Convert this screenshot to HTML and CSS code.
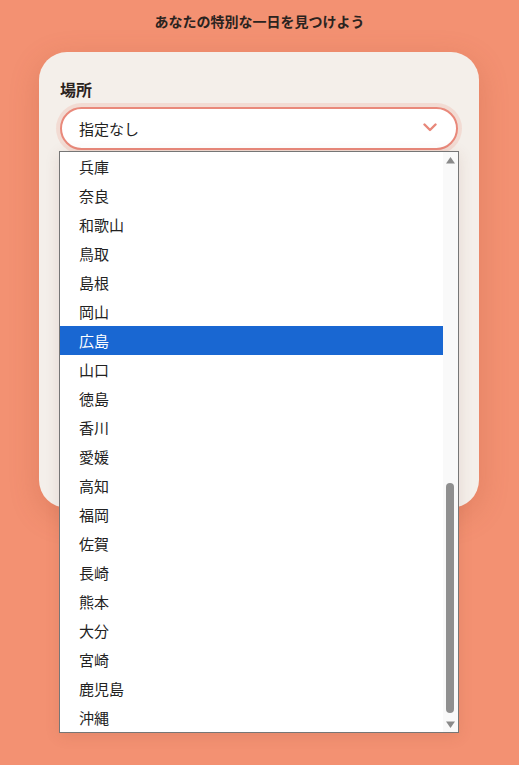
FILE: index.html
```html
<!DOCTYPE html>
<html lang="ja">
<head>
<meta charset="utf-8">
<title>あなたの特別な一日を見つけよう</title>
<link rel="stylesheet" href="styles.css">
</head>
<body>
<h1 class="title">あなたの特別な一日を見つけよう</h1>
<section class="card">
  <label class="label">場所</label>
  <div class="select">
    <span class="select-value">指定なし</span>
    <svg class="chevron" width="14" height="9" viewBox="0 0 14 9"><path d="M1.5 1.5 L7 7 L12.5 1.5" fill="none" stroke="#e8877a" stroke-width="2.4" stroke-linecap="round" stroke-linejoin="round"/></svg>
  </div>
  <div class="popup">
    <ul class="options">
      <li class="option">兵庫</li>
      <li class="option">奈良</li>
      <li class="option">和歌山</li>
      <li class="option">鳥取</li>
      <li class="option">島根</li>
      <li class="option">岡山</li>
      <li class="option selected">広島</li>
      <li class="option">山口</li>
      <li class="option">徳島</li>
      <li class="option">香川</li>
      <li class="option">愛媛</li>
      <li class="option">高知</li>
      <li class="option">福岡</li>
      <li class="option">佐賀</li>
      <li class="option">長崎</li>
      <li class="option">熊本</li>
      <li class="option">大分</li>
      <li class="option">宮崎</li>
      <li class="option">鹿児島</li>
      <li class="option">沖縄</li>
    </ul>
    <div class="scrollbar">
      <svg class="arrow" width="15" height="14" viewBox="0 0 15 14"><path d="M3 11.5 L7.5 5 L12 11.5 Z" fill="#8a8a8a"/></svg>
      <div class="track"><div class="thumb"></div></div>
      <svg class="arrow" width="15" height="14" viewBox="0 0 15 14"><path d="M3 3.5 L7.5 10 L12 3.5 Z" fill="#8a8a8a"/></svg>
    </div>
  </div>
</section>
</body>
</html>
```
FILE: styles.css
```css
* { box-sizing: border-box; }
html, body { margin: 0; padding: 0; }
body {
  width: 519px;
  height: 765px;
  overflow: hidden;
  background: #f39172;
  font-family: "Noto Sans CJK JP", "Noto Sans", sans-serif;
  color: #222;
}
.title {
  margin: 0;
  padding-top: 11px;
  font-size: 14px;
  line-height: 20px;
  font-weight: 700;
  text-align: center;
  color: #2a2320;
}
.card {
  position: relative;
  margin: 21px 0 0 39px;
  width: 440px;
  height: 456px;
  background: #f4efea;
  border-radius: 28px;
  padding: 26px 21px 0;
  box-shadow: 0 8px 30px rgba(160, 70, 40, 0.22);
}
.label {
  display: block;
  font-size: 16px;
  line-height: 22px;
  font-weight: 700;
  color: #2a2320;
  margin-bottom: 7px;
}
.select {
  display: flex;
  align-items: center;
  justify-content: space-between;
  width: 398px;
  height: 43px;
  background: #fff;
  border: 2px solid #e9897b;
  border-radius: 22px;
  padding: 0 19px 0 17px;
  box-shadow: 0 0 0 4px rgba(236, 150, 130, 0.22);
}
.select-value {
  font-size: 15px;
  line-height: 20px;
  color: #222;
}
.chevron { display: block; margin-top: -2px; }
.popup {
  position: absolute;
  left: 20px;
  top: 99px;
  width: 400px;
  height: 582px;
  background: #fff;
  border: 1px solid #767676;
  display: flex;
  box-shadow: 0 3px 14px rgba(120, 60, 40, 0.12);
}
.options {
  list-style: none;
  margin: 0;
  padding: 0;
  flex: 1;
}
.option {
  height: 29px;
  line-height: 29px;
  padding-left: 19px;
  font-size: 15px;
  color: #222;
}
.option.selected {
  background: #1967d2;
  color: #fff;
}
.scrollbar {
  width: 15px;
  background: #f9f9f9;
  display: flex;
  flex-direction: column;
}
.arrow { display: block; flex: none; }
.track {
  flex: 1;
  position: relative;
}
.thumb {
  position: absolute;
  left: 3px;
  width: 8px;
  top: 317px;
  height: 230px;
  border-radius: 4px;
  background: #8f8f8f;
}
```
